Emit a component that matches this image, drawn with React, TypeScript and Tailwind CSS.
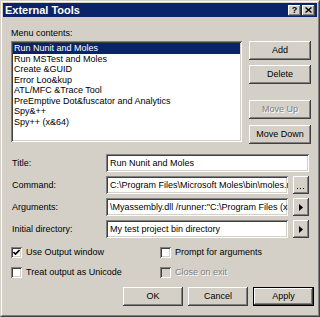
import React from "react";

const FACE = "bg-[#d4d0c8]";
const RAISED =
  "shadow-[inset_-1px_-1px_#404040,inset_1px_1px_#ffffff,inset_-2px_-2px_#808080,inset_2px_2px_#d4d0c8]";
const SUNKEN =
  "shadow-[inset_1px_1px_#808080,inset_-1px_-1px_#ffffff,inset_2px_2px_#404040,inset_-2px_-2px_#d4d0c8]";

const tools = [
  "Run Nunit and Moles",
  "Run MSTest and Moles",
  "Create &GUID",
  "Error Loo&kup",
  "ATL/MFC &Trace Tool",
  "PreEmptive Dot&fuscator and Analytics",
  "Spy&++",
  "Spy++ (x&64)",
];

function Button({
  label,
  className = "",
  disabled = false,
  isDefault = false,
}: {
  label: string;
  className?: string;
  disabled?: boolean;
  isDefault?: boolean;
}) {
  const inner = (
    <div
      className={`flex h-full w-full items-center justify-center ${FACE} ${RAISED} ${
        disabled ? "text-[#808080] [text-shadow:1px_1px_#ffffff]" : "text-black"
      }`}
    >
      {label}
    </div>
  );
  if (isDefault) {
    return <div className={`border border-black ${className}`}>{inner}</div>;
  }
  return <div className={className}>{inner}</div>;
}

function CheckBox({
  label,
  checked = false,
  disabled = false,
}: {
  label: string;
  checked?: boolean;
  disabled?: boolean;
}) {
  return (
    <div className="flex items-center gap-[4px] h-[11px]">
      <div
        className={`flex h-[11px] w-[11px] shrink-0 items-center justify-center ${SUNKEN} ${
          disabled ? "bg-[#d4d0c8]" : "bg-white"
        }`}
      >
        {checked && (
          <svg width="7" height="7" viewBox="0 0 7 7">
            <path d="M0.5 3 L2.5 5 L6.5 1" stroke="#000" strokeWidth="1.6" fill="none" />
          </svg>
        )}
      </div>
      <span className={disabled ? "text-[#808080] [text-shadow:1px_1px_#ffffff]" : "text-black"}>
        {label}
      </span>
    </div>
  );
}

function Field({ label, value, extra }: { label: string; value: string; extra?: "dots" | "arrow" }) {
  return (
    <div className="flex h-[18px] items-center">
      <div className="w-[95px] shrink-0 pl-[1px]">{label}</div>
      <div
        className={`flex h-full items-center overflow-hidden whitespace-nowrap bg-white pl-[4px] ${SUNKEN} ${
          extra ? "w-[182px]" : "w-[203px]"
        }`}
      >
        {value}
      </div>
      {extra && (
        <div className={`ml-[5px] h-[18px] w-[16px] shrink-0 ${FACE} ${RAISED} flex items-end justify-center pb-[4px]`}>
          {extra === "dots" ? (
            <svg width="8" height="2" viewBox="0 0 8 2">
              <rect x="0" y="0" width="1" height="1" fill="#000" />
              <rect x="3" y="0" width="1" height="1" fill="#000" />
              <rect x="6" y="0" width="1" height="1" fill="#000" />
            </svg>
          ) : (
            <svg width="4" height="7" viewBox="0 0 4 7" className="mb-[1px]">
              <path d="M0 0 L4 3.5 L0 7 Z" fill="#000" />
            </svg>
          )}
        </div>
      )}
    </div>
  );
}

export default function App() {
  return (
    <div className="h-[317px] w-[320px] overflow-hidden bg-[#d4d0c8] font-['Liberation_Sans',Arial,sans-serif] text-[9px] leading-[11px] text-black">
      {/* window frame */}
      <div className="h-full w-full border border-t-[#d4d0c8] border-l-[#d4d0c8] border-b-[#404040] border-r-[#404040]">
        <div className="flex h-full w-full flex-col border border-t-white border-l-white border-b-[#808080] border-r-[#808080] p-[1px]">
          {/* title bar */}
          <div className="flex h-[14px] shrink-0 items-center justify-between bg-[#0a246a] pl-[2px] pr-[2px]">
            <span className="text-[11px] font-bold text-white">External Tools</span>
            <div className="flex gap-[1px]">
              <div className={`flex h-[11px] w-[13px] items-center justify-center ${FACE} ${RAISED} text-[9px] font-bold leading-none`}>
                ?
              </div>
              <div className={`flex h-[11px] w-[13px] items-center justify-center ${FACE} ${RAISED}`}>
                <svg width="7" height="6" viewBox="0 0 7 6">
                  <path d="M0.5 0.5 L6.5 5.5 M6.5 0.5 L0.5 5.5" stroke="#000" strokeWidth="1.4" />
                </svg>
              </div>
            </div>
          </div>

          {/* body */}
          <div className="flex flex-col pl-[8px] pr-[6px] pt-[11px]">
            <div className="mb-[2px]">Menu contents:</div>

            <div className="flex gap-[7px]">
              <div className={`h-[101px] w-[231px] bg-white p-[2px] ${SUNKEN}`}>
                {tools.map((t, i) => (
                  <div
                    key={t}
                    className={`h-[10.5px] whitespace-nowrap pl-[1px] leading-[10.5px] ${
                      i === 0 ? "bg-[#0a246a] text-white" : ""
                    }`}
                  >
                    {t}
                  </div>
                ))}
              </div>
              <div className="flex w-[62px] flex-col">
                <Button label="Add" className="h-[19px]" />
                <Button label="Delete" className="mt-[5px] h-[19px]" />
                <Button label="Move Up" className="mt-[16px] h-[19px]" disabled />
                <Button label="Move Down" className="mt-[6px] h-[19px]" />
              </div>
            </div>

            <div className="mt-[10px] flex flex-col gap-[4px]">
              <Field label="Title:" value="Run Nunit and Moles" />
              <Field label="Command:" value="C:\Program Files\Microsoft Moles\bin\moles.ru" extra="dots" />
              <Field label="Arguments:" value={'\\Myassembly.dll /runner:"C:\\Program Files (x8'} extra="arrow" />
              <Field label="Initial directory:" value="My test project bin directory" extra="arrow" />
            </div>

            <div className="mt-[9px] grid grid-cols-[149px_1fr] gap-y-[9px]">
              <CheckBox label="Use Output window" checked />
              <CheckBox label="Prompt for arguments" />
              <CheckBox label="Treat output as Unicode" />
              <CheckBox label="Close on exit" disabled />
            </div>

            <div className="-mr-[3px] mt-[9px] flex justify-end gap-[5px]">
              <Button label="OK" className="h-[19px] w-[60px]" />
              <Button label="Cancel" className="h-[19px] w-[60px]" />
              <Button label="Apply" className="h-[19px] w-[61px]" isDefault />
            </div>
          </div>
        </div>
      </div>
    </div>
  );
}
